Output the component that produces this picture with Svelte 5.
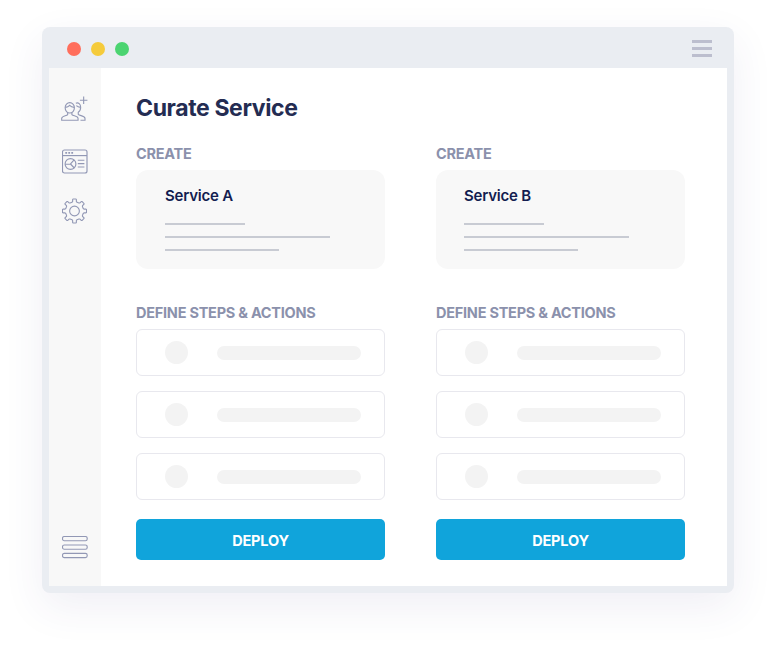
<script>
  const services = [
    { name: 'Service A', inset: 29 },
    { name: 'Service B', inset: 28 }
  ];
  const lineWidths = [80, 165, 114];
  const steps = [1, 2, 3];

  // Eight-toothed cog outline centred on (13, 13).
  function cog() {
    const tooth = [[-16, 9.3], [-11, 9.9], [-9.3, 11.9], [-7, 12.4], [7, 12.4], [9.3, 11.9], [11, 9.9], [16, 9.3]];
    let d = '';
    for (let i = 0; i < 8; i++) {
      for (const [a, r] of tooth) {
        const t = ((i * 45 + a) * Math.PI) / 180;
        d += (d ? 'L' : 'M') + (13 + r * Math.sin(t)).toFixed(2) + ' ' + (13 - r * Math.cos(t)).toFixed(2);
      }
    }
    return d + 'Z';
  }
</script>

<div class="page">
  <div class="window">
    <header>
      <div class="dots"><i class="red"></i><i class="yellow"></i><i class="green"></i></div>
      <div class="burger"><b></b><b></b><b></b></div>
    </header>
    <div class="body">
      <nav>
        <svg class="people" width="27" height="26" viewBox="0.4 0 28 26">
          <path d="M23.9 0v7.8M20 3.9h7.8" />
          <ellipse cx="9.5" cy="11.8" rx="4.8" ry="5.4" />
          <path d="M4.9 11.3c2.1 0 3.4-.7 4.5-2 1.1 1.3 2.5 2 4.7 2M7.3 16.6v2.2c-1.2 1.5-6.2 1.2-6.2 4v1.8h17v-1.8c0-2.8-5.2-2.5-6.4-4v-2.2" />
          <path d="M15.8 7c2.6-1.2 5 .9 5 4.2 0 2.5-1 4.3-2.5 5.2v2.2c1.2 1.6 7 1.2 7 4.2v1.8h-4.7M16.3 9.6c1.2 1.2 2.5 1.7 4.4 1.7" />
        </svg>
        <svg class="dash" width="26" height="25" viewBox="0 0 26 25">
          <rect x=".5" y="1" width="24.5" height="23" rx="2" />
          <path d="M.5 6.6H25" />
          <path d="M3.3 3.9h1.8M6.3 3.9h1.8M9.3 3.9h1.8" stroke-width="1.7" />
          <path d="M15.8 11.2h6.6M15.8 14.6h6.6M15.8 18h6.6" />
          <circle cx="8.5" cy="15" r="5.4" />
          <path d="M3.1 15.2l5.4-.2 3.6-4.1M8.5 15l3.8 4" />
        </svg>
        <svg class="cog" width="25" height="26" viewBox="0.2 0 25.6 26">
          <path d={cog()} stroke-linejoin="round" />
          <circle cx="13" cy="13" r="5" />
        </svg>
        <svg class="list" width="26" height="23" viewBox="0 0 26 23">
          <rect x=".5" y=".5" width="24.7" height="4.2" rx="1.8" />
          <rect x=".5" y="9" width="24.7" height="4.2" rx="1.8" />
          <rect x=".5" y="17.4" width="24.7" height="4.2" rx="1.8" />
        </svg>
      </nav>
      <main>
        <h1>Curate Service</h1>
        <div class="columns">
          {#each services as service}
            <section>
              <h2>CREATE</h2>
              <div class="card" style="padding-left: {service.inset}px">
                <h3>{service.name}</h3>
                {#each lineWidths as width}
                  <div class="line" style="width: {width}px"></div>
                {/each}
              </div>
              <h2>DEFINE STEPS &amp; ACTIONS</h2>
              <div class="steps">
                {#each steps as step (step)}
                  <div class="step"><span class="bullet"></span><span class="bar"></span></div>
                {/each}
              </div>
              <button>DEPLOY</button>
            </section>
          {/each}
        </div>
      </main>
    </div>
  </div>
</div>

<style>
  :global(body) { margin: 0; background: #fff; }
  .page {
    box-sizing: border-box;
    width: 776px;
    height: 651px;
    padding: 27px 42px 58px;
    overflow: hidden;
    font-family: Inter, 'Liberation Sans', sans-serif;
  }
  .window {
    box-sizing: border-box;
    height: 566px;
    padding: 0 7px 7px;
    border-radius: 8px;
    background: #eaedf2;
    box-shadow: 0 14px 42px rgba(62, 57, 127, 0.08);
  }
  header {
    box-sizing: border-box;
    height: 41px;
    padding: 0 15px 0 18px;
    display: flex;
    align-items: center;
    justify-content: space-between;
  }
  .dots { display: flex; gap: 10px; padding-top: 3px; }
  .dots i { width: 14px; height: 14px; border-radius: 50%; }
  .red { background: #ff6e5c; }
  .yellow { background: #f5cb3b; }
  .green { background: #4bd471; }
  .burger { display: flex; flex-direction: column; gap: 4px; padding-top: 2px; }
  .burger b { width: 20px; height: 3px; background: #bcbece; }
  .body { display: flex; height: 518px; background: #fff; }
  nav {
    box-sizing: border-box;
    width: 52px;
    padding: 28px 0 27px 12px;
    display: flex;
    flex-direction: column;
    background: #f8f8f8;
  }
  svg { display: block; fill: none; stroke: #9298b5; stroke-width: 1.15; }
  .people { margin-bottom: 27px; }
  .dash, .cog { margin-left: 1px; }
  .dash { margin-bottom: 24px; }
  .list { margin: auto 0 0 1px; }
  main { padding: 25px 0 0 35px; }
  h1 {
    margin: 0;
    font-size: 23px;
    line-height: 30px;
    font-weight: 650;
    letter-spacing: -0.38px;
    color: #242c52;
    white-space: nowrap;
  }
  .columns { display: flex; gap: 51px; padding-top: 21px; }
  section { width: 249px; }
  h2 {
    margin: 0;
    font-size: 14.5px;
    line-height: 20px;
    font-weight: 650;
    letter-spacing: -0.25px;
    color: #8b91ac;
    white-space: nowrap;
  }
  .card {
    box-sizing: border-box;
    height: 99px;
    margin: 6px 0 34px;
    padding-top: 15px;
    border-radius: 12px;
    background: #f8f8f8;
  }
  h3 {
    margin: 0 0 27px;
    height: 11px;
    font-size: 15px;
    line-height: 22px;
    font-weight: 600;
    letter-spacing: -0.2px;
    color: #131d50;
  }
  .line { height: 2px; margin-bottom: 11px; background: #c8cbd3; }
  .steps { display: flex; flex-direction: column; gap: 15px; padding: 6px 0 19px; }
  .step {
    box-sizing: border-box;
    height: 47px;
    padding-left: 28px;
    display: flex;
    align-items: center;
    gap: 29px;
    border: 1px solid #e8e8ee;
    border-radius: 6px;
  }
  .bullet { width: 23px; height: 23px; border-radius: 50%; background: #f3f3f3; }
  .bar { width: 144px; height: 14px; border-radius: 7px; background: #f3f3f3; }
  button {
    display: block;
    width: 249px;
    height: 41px;
    padding: 1px 0 0;
    border: 0;
    border-radius: 5px;
    background: #10a4db;
    color: #fff;
    font: 650 14.5px Inter, 'Liberation Sans', sans-serif;
    letter-spacing: -0.15px;
  }
</style>
